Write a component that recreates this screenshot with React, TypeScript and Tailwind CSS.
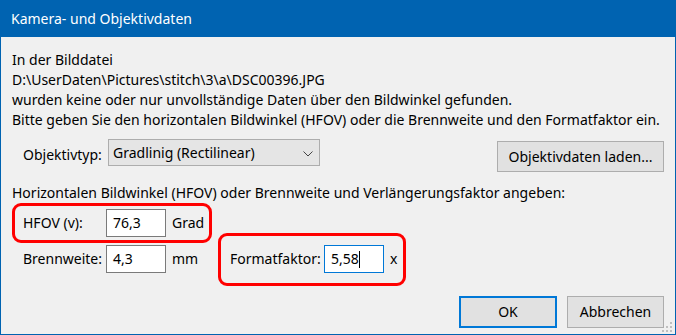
import React from 'react';

const FONT = { fontFamily: '"Noto Sans", "Open Sans", sans-serif' };

function Chevron() {
  return (
    <svg width="10" height="6" viewBox="0 0 10 6" className="absolute right-[6px] top-[11px]">
      <path d="M0.5 0.5 L5 5 L9.5 0.5" fill="none" stroke="#444" strokeWidth="1" />
    </svg>
  );
}

function SizeGrip() {
  const dots = [
    [8, 0],
    [4, 4],
    [8, 4],
    [0, 8],
    [4, 8],
    [8, 8],
  ];
  return (
    <div className="absolute right-[3px] bottom-[2px] w-[10px] h-[10px]">
      {dots.map(([x, y], i) => (
        <span key={i} className="absolute w-[2px] h-[2px] bg-[#bfbfbf]" style={{ left: x, top: y }} />
      ))}
    </div>
  );
}

function Field({ value, focused }: { value: string; focused?: boolean }) {
  return (
    <div
      className={
        'w-[60px] h-[28px] bg-white flex items-center pl-[6px] border ' +
        (focused ? 'border-[#0078d7]' : 'border-[#7a7a7a]')
      }
    >
      <span>{value}</span>
      {focused && <span className="w-[1px] h-[17px] bg-black" />}
    </div>
  );
}

export default function App() {
  return (
    <div
      className="relative w-[676px] h-[335px] bg-[#f0f0f0] border-x border-b border-[#0063b1] text-black text-[14px] leading-[20px] whitespace-nowrap overflow-hidden"
      style={FONT}
    >
      {/* Title bar */}
      <div className="h-[37px] bg-[#0063b1] text-white flex items-center pl-[10px]">Kamera- und Objektivdaten</div>

      <div className="pl-[11px] pr-[11px]">
        {/* Message */}
        <div className="mt-[13px]">
          <div>In der Bilddatei</div>
          <div>D:\UserDaten\Pictures\stitch\3\a\DSC00396.JPG</div>
          <div>wurden keine oder nur unvollständige Daten über den Bildwinkel gefunden.</div>
          <div>Bitte geben Sie den horizontalen Bildwinkel (HFOV) oder die Brennweite und den Formatfaktor ein.</div>
        </div>

        {/* Lens type row */}
        <div className="flex items-start mt-[9px]">
          <span className="w-[85px] ml-[11px] mt-[6px]">Objektivtyp:</span>
          <div className="relative w-[212px] h-[27px] bg-[#e5e5e5] border border-[#adadad] pl-[4px] flex items-center">
            Gradlinig (Rectilinear)
            <Chevron />
          </div>
          <button className="ml-auto mt-[2px] w-[167px] h-[31px] bg-[#e1e1e1] border border-[#adadad]">
            Objektivdaten laden...
          </button>
        </div>

        <div className="mt-[11px]">Horizontalen Bildwinkel (HFOV) oder Brennweite und Verlängerungsfaktor angeben:</div>

        {/* HFOV */}
        <div className="w-[200px] h-[40px] border-[3px] border-[#ff0000] rounded-[9px] flex items-center pl-[8px]">
          <span className="w-[83px]">HFOV (v):</span>
          <Field value="76,3" />
          <span className="ml-[6px]">Grad</span>
        </div>

        {/* Focal length + crop factor */}
        <div className="flex items-center mt-[2px] h-[28px]">
          <span className="w-[83px] ml-[11px]">Brennweite:</span>
          <Field value="4,3" />
          <span className="ml-[6px] w-[46px]">mm</span>
          <div className="w-[188px] h-[53px] -my-[12px] border-[3px] border-[#ff0000] rounded-[9px] flex items-center pl-[9px]">
            <span className="w-[94px]">Formatfaktor:</span>
            <Field value="5,58" focused />
            <span className="ml-[6px]">x</span>
          </div>
        </div>

        {/* Buttons */}
        <div className="flex justify-end gap-[10px] mt-[23px]">
          <button className="w-[98px] h-[32px] bg-[#e1e1e1] border-2 border-[#0078d7]">OK</button>
          <button className="w-[97px] h-[32px] bg-[#e1e1e1] border border-[#adadad]">Abbrechen</button>
        </div>
      </div>

      <SizeGrip />
    </div>
  );
}
